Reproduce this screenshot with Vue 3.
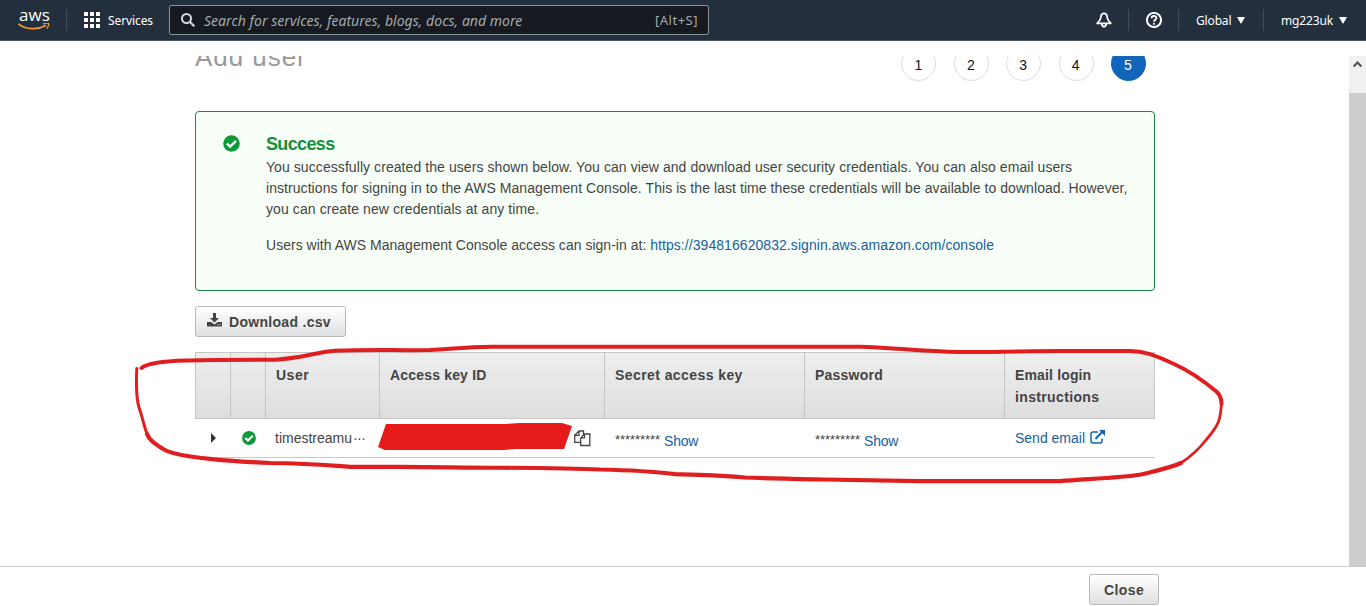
<script setup>
const steps = [1, 2, 3, 4, 5]
const message = [
  'You successfully created the users shown below. You can view and download user security credentials. You can also email users',
  'instructions for signing in to the AWS Management Console. This is the last time these credentials will be available to download. However,',
  'you can create new credentials at any time.',
]
</script>

<template>
  <div class="page">
    <header class="nav">
      <div class="logo">
        <span class="logo-text">aws</span>
        <svg class="smile" width="32" height="8" viewBox="0 0 32 8">
          <path d="M.3.8C8 6.700 19 7.200 28 2.500" fill="none" stroke="#f29a2c" stroke-width="1.700" />
          <path d="M25 .9C28 .1 30.500.1 30.700.7C31 2 30 4 28.900 5.600" fill="none" stroke="#f29a2c" stroke-width="1.300" />
        </svg>
      </div>
      <i class="sep sep-logo"></i>
      <svg class="grid" width="16" height="16" viewBox="0 0 16 16" fill="#fff">
        <path d="M0 0h4v4H0zM6 0h4v4H6zM12 0h4v4h-4zM0 6h4v4H0zM6 6h4v4H6zM12 6h4v4h-4zM0 12h4v4H0zM6 12h4v4H6zM12 12h4v4h-4z" />
      </svg>
      <span class="services">Services</span>
      <div class="search">
        <svg width="14" height="14" viewBox="0 0 14 14" fill="none" stroke="#d5dbdb" stroke-width="2">
          <circle cx="5.500" cy="5.500" r="4.500" /><path d="M8.800 8.800L13.300 13.300" />
        </svg>
        <span class="placeholder">Search for services, features, blogs, docs, and more</span>
        <span class="shortcut">[Alt+S]</span>
      </div>
      <div class="nav-right">
        <svg class="bell" width="16" height="16" viewBox="0 0 16 16" fill="none" stroke="#fff" stroke-width="1.800">
          <path d="M8 1.300C6 1.300 5 2.900 4.900 5C4.700 8 3.200 9.300 1.200 11.300H14.800C12.800 9.300 11.300 8 11.100 5C11 2.900 10 1.300 8 1.300Z" stroke-linejoin="round" />
          <path d="M5.800 11.500C5.600 15.800 10.400 15.800 10.200 11.500" />
        </svg>
        <i class="sep"></i>
        <svg class="help" width="16" height="16" viewBox="0 0 16 16" fill="none" stroke="#fff">
          <circle cx="8" cy="8" r="7.100" stroke-width="1.900" />
          <path d="M5.600 6.200C5.600 3.300 10.400 3.300 10.400 6C10.400 7.800 8 7.700 8 9.800M8 11v1.700" stroke-width="1.800" />
        </svg>
        <i class="sep"></i>
        <span class="menu global">Global</span><i class="caret"></i>
        <i class="sep sep-user"></i>
        <span class="menu user">mg223uk</span><i class="caret"></i>
      </div>
    </header>

    <main class="viewport">
      <div class="scroll">
        <div class="title-row">
          <h1>Add user</h1>
          <div class="steps">
            <span v-for="s in steps" :key="s" class="step" :class="{ active: s === 5 }">{{ s }}</span>
          </div>
        </div>

        <section class="alert">
          <svg class="check" width="17" height="17" viewBox="0 0 17 17">
            <circle cx="8.500" cy="8.500" r="8.300" fill="#0a9a38" />
            <path d="M3.900 8.600L7.200 11.600L13 5.900" fill="none" stroke="#fff" stroke-width="2.500" />
          </svg>
          <div class="alert-body">
            <h2>Success</h2>
            <p><span v-for="(l, i) in message" :key="i" class="line" :class="'line-' + i">{{ l }}</span></p>
            <p class="signin"><span class="lead">Users with AWS Management Console access can sign-in at:</span> <a>https://394816620832.signin.aws.amazon.com/console</a></p>
          </div>
        </section>

        <button class="btn download">
          <svg width="15" height="14" viewBox="0 0 15 14" fill="#444">
            <path d="M6 0h3v5h3L7.500 9.500L3 5h3z" />
            <path d="M0 9h4.200l3.300 2.500L10.800 9H15v4.500H0z" /><path d="M10.500 11.200h1v1h-1zM12.500 11.200h1v1h-1z" fill="#eee" />
          </svg>
          <span>Download .csv</span>
        </button>

        <div class="table">
          <div class="row head">
            <div></div><div></div>
            <div><span class="h-user">User</span></div>
            <div><span class="h-access">Access key ID</span></div>
            <div><span class="h-secret">Secret access key</span></div>
            <div><span class="h-pass">Password</span></div>
            <div><span class="h-email">Email login</span><br />instructions</div>
          </div>
          <div class="row body">
            <div class="center"><i class="expand"></i></div>
            <div class="center">
              <svg width="14" height="14" viewBox="0 0 17 17">
                <circle cx="8.500" cy="8.500" r="8.400" fill="#0a9a38" />
                <path d="M3.900 8.600L7.200 11.600L13 5.900" fill="none" stroke="#fff" stroke-width="2.600" />
              </svg>
            </div>
            <div class="name"><span>timestreamu</span><span class="dots">···</span></div>
            <div class="key">
              <svg width="17" height="17" viewBox="0 0 17 17" fill="#fff" stroke="#444" stroke-width="1.300">
                <path d="M5 1H9.500V12.300H.7V5.300zM5 1V5.300H.7" />
                <path d="M10.500 4H15.800V15.500H6.700V7.900zM10.500 4V7.900H6.700" />
              </svg>
            </div>
            <div class="secret"><span class="stars">*********</span><a>Show</a></div>
            <div class="secret"><span class="stars">*********</span><a>Show</a></div>
            <div class="mail">
              <a>Send email</a>
              <svg width="15" height="14" viewBox="0 0 15 14" fill="none" stroke="#1463b0">
                <path d="M8 2H3Q1 2 1 4V11Q1 13 3 13H10Q12 13 12 11V8.500" stroke-width="1.500" />
                <path d="M5.500 8.700L12 2.200" stroke-width="2.200" /><path d="M9 0H15V6z" fill="#1463b0" stroke="none" />
              </svg>
            </div>
          </div>
        </div>
      </div>
      <div class="scrollbar">
        <svg width="17" height="17" viewBox="0 0 17 17"><path d="M4.700 10.500L8.500 6.500L12.300 10.500" fill="none" stroke="#505050" stroke-width="2" /></svg>
        <div class="thumb"></div>
      </div>
    </main>

    <footer><button class="btn close"><span>Close</span></button></footer>

    <svg class="ink" width="1366" height="606" viewBox="0 0 1366 606" fill="none" stroke="#e01e1f" stroke-linecap="round" stroke-linejoin="round">
      <path d="M386 424L440 424L505 424L520 423H562L572 426L564 449H516L503 450H385L378 447L386 424Z" fill="#e81b1c" stroke="none" />
      <path d="M141.500 368C148 362.500 168 361 186 360.500C215 359.800 245 359.700 275 359.700C300 358.500 315 352.500 335 350.800C365 349.500 400 350.500 430 350C455 348.500 470 347 492 346.700H860C890 347.200 920 351.500 960 352C995 352.300 1030 351 1060 351H1130C1147 351 1160 358 1173 363.500C1190 371 1205 382 1217 392C1220 395 1221.500 399 1221.500 404" stroke-width="4" />
      <path d="M1221.500 403C1220.500 420 1219 425 1206 440C1199 449 1190 457 1181 463" stroke-width="2.800" />
      <path d="M1181 463C1170 468 1155 471 1141 474.500C1120 478 1085 479 1060 481.200H920L825 479.500C795 479 770 478.700 745 477.500C720 475 700 475 675 474.200C650 471 625 470 600 469.500C560 467.500 500 468 450 467.300C430 467 410 466.800 400 466.800H350C330 465.500 315 463.500 270 463C245 461.800 225 460.500 210 458.800C190 457 172 454 164 449.500C155 444 149 440 147 434" stroke-width="4.200" />
      <path d="M136.800 368.500C136 385 136 399 139.500 409C143 419 144 427 147.500 435" stroke-width="3" />
    </svg>
  </div>
</template>

<style>
body { background: #fff; overflow: hidden; }
</style>

<style scoped>
* { box-sizing: border-box; }
.page { position: relative; width: 1366px; height: 606px; overflow: hidden; display: flex; flex-direction: column; background: #fff; color: #444; font: 14px/21px "Liberation Sans", Arial, sans-serif; }
.nav { height: 41px; flex: none; display: flex; align-items: center; background: #242f3e; border-bottom: 1px solid #4b535e; color: #fff; font-family: "Noto Sans", sans-serif; padding-left: 18px; }
.logo { width: 32px; height: 23px; display: flex; flex-direction: column; }
.logo-text { font: 500 17px/14px "Open Sans", sans-serif; letter-spacing: .1px; padding-left: 1px; height: 14px; margin-top: -1px; }
.smile { flex: none; margin-top: 1px; }
.sep { width: 1px; height: 22px; background: #414b58; flex: none; }
.sep-logo { margin: 0 17px 0 16px; }
.services { font-size: 12px; margin-left: 8px; width: 61px; white-space: nowrap; letter-spacing: -.1px; }
.search { width: 540px; height: 30px; border: 1px solid #879596; border-radius: 2px; background: #16191f; display: flex; align-items: center; padding: 0 10px 0 11px; color: #a2aaad; }
.placeholder { font-size: 14px; font-style: italic; margin-left: 9px; flex: 1; white-space: nowrap; letter-spacing: .03px; }
.shortcut { font-size: 13px; letter-spacing: .5px; }
.nav-right { margin-left: 387px; display: flex; align-items: center; }
.nav-right .sep { margin: 0 17px 0 16px; }
.menu { font-size: 12px; white-space: nowrap; letter-spacing: -.15px; }
.global { width: 36px; }
.user { width: 53px; }
.nav-right .sep-user { margin: 0 17px 0 18px; }
.caret { border: 4.500px solid transparent; border-top: 7px solid #fff; border-bottom: 0; margin-left: 5px; }
.viewport { margin-top: 15px; height: 510px; overflow: hidden; display: flex; flex: none; }
.scroll { width: 1349px; padding-left: 195px; margin-top: -10px; }
.title-row { display: flex; justify-content: space-between; width: 951px; height: 65px; }
h1 { margin: -5px 0 0; font-weight: 400; font-size: 26px; line-height: 32px; color: #999; letter-spacing: .95px; }
.steps { display: flex; gap: 17.400px; }
.step { width: 35px; height: 35px; border: 1px solid #ddd; border-radius: 50%; color: #111; text-align: center; line-height: 36px; padding-right: 1px; }
.step.active { background: #1166bb; border-color: #1166bb; color: #fff; }
.alert { width: 960px; height: 180px; border: 1px solid #1c8745; border-radius: 4px; background: #f7fff8; padding: 21px 20px 0 27px; display: flex; }
.check { margin: 2px 26px 0 0; flex: none; }
h2 { margin: 0; font-size: 18px; line-height: 22px; color: #14903a; letter-spacing: -.65px; }
p { margin: 2px 0 0; }
.line { display: block; white-space: nowrap; }
.line-0 { letter-spacing: .072px; }
.line-1 { letter-spacing: .062px; }
.line-2 { letter-spacing: .09px; }
.lead { letter-spacing: .02px; }
.signin { margin-top: 15px; white-space: nowrap; }
.signin a { letter-spacing: .06px; }
a { color: #17609f; }
.btn { height: 31px; border: 1px solid #b9b9b9; border-radius: 3px; background: linear-gradient(#fff, #e0e0e0); color: #444; font: bold 14px/20px "Liberation Sans", Arial, sans-serif; display: flex; align-items: center; padding: 0; white-space: nowrap; }
.download { width: 151px; margin-top: 15px; padding: 0 0 0 11px; letter-spacing: .3px; }
.download svg { margin: -3px 7px 0 0; }
.table { margin-top: 15px; width: 960px; }
.row { display: grid; grid-template-columns: 35px 35px 114px 225px 200px 200px 151px; }
.head { height: 67px; background: linear-gradient(#eee, #dedede); border-top: 1px solid #c6c6c6; border-bottom: 1px solid #c6c6c6; font-weight: bold; line-height: 22px; letter-spacing: .35px; }
.head > div { border-left: 1px solid #c6c6c6; padding: 11px 0 0 10px; white-space: nowrap; }
.head > div:last-child { border-right: 1px solid #c6c6c6; }
.h-user { letter-spacing: .5px; }
.h-access { letter-spacing: .18px; }
.h-secret { letter-spacing: .42px; }
.h-pass { letter-spacing: .22px; }
.h-email { letter-spacing: .15px; }
.body { height: 39px; border-bottom: 1px solid #c8c8c8; }
.center { display: flex; align-items: center; justify-content: center; padding-left: 2px; }
.expand { border: 5px solid transparent; border-left: 5px solid #333; border-right: 0; }
.name { padding: 9px 0 0 10px; white-space: nowrap; }
.dots { letter-spacing: -.6px; margin-left: 1px; }
.key { padding: 11px 0 0 195px; }
.secret { padding: 12px 0 0 11px; display: flex; letter-spacing: -.2px; }
.stars { width: 49px; font-size: 13px; line-height: 17px; letter-spacing: -.06px; }
.mail { padding: 9px 0 0 11px; display: flex; }
.mail svg { margin: 2px 0 0 5px; }
.scrollbar { width: 17px; background: #f0f0f0; display: flex; flex-direction: column; }
.thumb { margin-top: 20px; flex: 1; background: #cdcdcd; }
footer { height: 40px; border-top: 1px solid #ccc; padding: 7px 0 0 1089px; }
.close { width: 70px; justify-content: center; letter-spacing: .4px; }
.ink { position: absolute; left: 0; top: 0; pointer-events: none; }
</style>
